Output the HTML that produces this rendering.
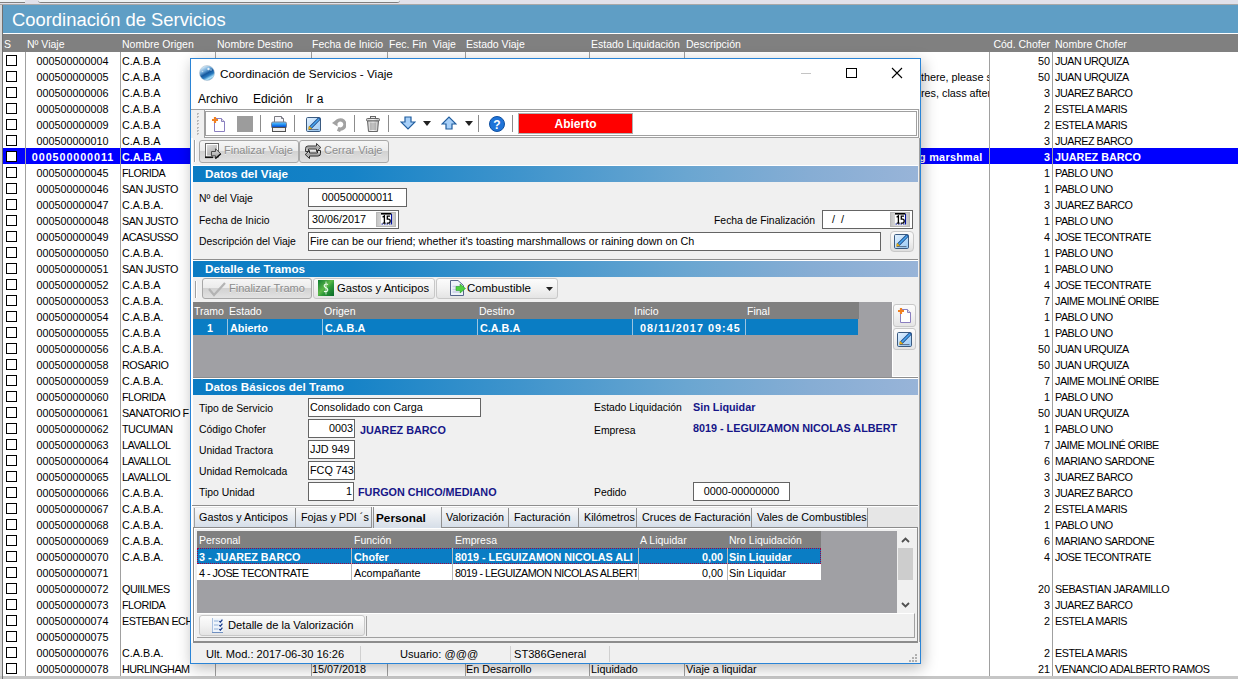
<!DOCTYPE html>
<html><head><meta charset="utf-8"><style>
html,body{margin:0;padding:0;width:1238px;height:679px;overflow:hidden;background:#f0f0f0}
body>div,body>svg{position:absolute}
.t{white-space:nowrap;font-family:"Liberation Sans",sans-serif}
</style></head><body>
<div style="left:0px;top:0px;width:1238px;height:679px;background:#f0f0f0"></div>
<div style="left:0px;top:0px;width:1238px;height:5px;background:#e1e1ea"></div>
<div style="left:0px;top:0px;width:25px;height:3px;background:#eef2f4;border-bottom:1px solid #808080;box-sizing:border-box"></div>
<div style="left:38px;top:0px;width:362px;height:3px;background:#eef2f4;border-bottom:1px solid #808080;box-sizing:border-box;border-radius:0 0 3px 3px"></div>
<div style="left:0px;top:4px;width:1238px;height:1px;background:#a8a8a8"></div>
<div style="left:0px;top:5px;width:2px;height:674px;background:#d8d8d8"></div>
<div style="left:2px;top:5px;width:1px;height:671px;background:#707070"></div>
<div style="left:3px;top:5px;width:1235px;height:28px;background:#5f9ec5"></div>
<div class="t" style="left:12px;top:5.5px;height:28px;line-height:28px;font-size:18.4px;font-weight:normal;color:#fff;">Coordinación de Servicios</div>
<div style="left:3px;top:33px;width:1235px;height:1px;background:#ffffff"></div>
<div style="left:3px;top:34px;width:1235px;height:18px;background:#808080"></div>
<div class="t" style="left:4px;top:35.5px;height:17px;line-height:17px;font-size:10.5px;font-weight:normal;color:#fff;">S</div>
<div class="t" style="left:27px;top:35.5px;height:17px;line-height:17px;font-size:10.5px;font-weight:normal;color:#fff;">Nº Viaje</div>
<div class="t" style="left:122px;top:35.5px;height:17px;line-height:17px;font-size:10.5px;font-weight:normal;color:#fff;">Nombre Origen</div>
<div class="t" style="left:217px;top:35.5px;height:17px;line-height:17px;font-size:10.5px;font-weight:normal;color:#fff;">Nombre Destino</div>
<div class="t" style="left:312px;top:35.5px;height:17px;line-height:17px;font-size:10.5px;font-weight:normal;color:#fff;">Fecha de Inicio</div>
<div class="t" style="left:389px;top:35.5px;height:17px;line-height:17px;font-size:10.5px;font-weight:normal;color:#fff;">Fec. Fin&nbsp; Viaje</div>
<div class="t" style="left:466px;top:35.5px;height:17px;line-height:17px;font-size:10.5px;font-weight:normal;color:#fff;">Estado Viaje</div>
<div class="t" style="left:591px;top:35.5px;height:17px;line-height:17px;font-size:10.5px;font-weight:normal;color:#fff;">Estado Liquidación</div>
<div class="t" style="left:686px;top:35.5px;height:17px;line-height:17px;font-size:10.5px;font-weight:normal;color:#fff;">Descripción</div>
<div class="t" style="left:1055px;top:35.5px;height:17px;line-height:17px;font-size:10.5px;font-weight:normal;color:#fff;">Nombre Chofer</div>
<div class="t" style="right:188px;top:35.5px;height:17px;line-height:17px;font-size:10.5px;font-weight:normal;color:#fff;text-align:right;">Cód. Chofer</div>
<div style="left:3px;top:52px;width:1235px;height:624px;background:#fff"></div>
<div style="left:6px;top:55px;width:11px;height:11px;background:#fff;border:1px solid #000;box-sizing:border-box"></div>
<div class="t" style="left:25px;top:53px;height:16px;line-height:16px;font-size:10.8px;font-weight:normal;color:#000;width:95px;text-align:center;">000500000004</div>
<div class="t" style="left:122px;top:53px;height:16px;line-height:16px;font-size:10.8px;font-weight:normal;color:#000;">C.A.B.A</div>
<div class="t" style="right:188px;top:53px;height:16px;line-height:16px;font-size:10.8px;font-weight:normal;color:#000;text-align:right;">50</div>
<div class="t" style="left:1055px;top:53px;height:16px;line-height:16px;font-size:10.8px;font-weight:normal;color:#000;letter-spacing:-0.5px;">JUAN URQUIZA</div>
<div style="left:6px;top:71px;width:11px;height:11px;background:#fff;border:1px solid #000;box-sizing:border-box"></div>
<div class="t" style="left:25px;top:69px;height:16px;line-height:16px;font-size:10.8px;font-weight:normal;color:#000;width:95px;text-align:center;">000500000005</div>
<div class="t" style="left:122px;top:69px;height:16px;line-height:16px;font-size:10.8px;font-weight:normal;color:#000;">C.A.B.A</div>
<div class="t" style="right:188px;top:69px;height:16px;line-height:16px;font-size:10.8px;font-weight:normal;color:#000;text-align:right;">50</div>
<div class="t" style="left:1055px;top:69px;height:16px;line-height:16px;font-size:10.8px;font-weight:normal;color:#000;letter-spacing:-0.5px;">JUAN URQUIZA</div>
<div style="left:6px;top:87px;width:11px;height:11px;background:#fff;border:1px solid #000;box-sizing:border-box"></div>
<div class="t" style="left:25px;top:85px;height:16px;line-height:16px;font-size:10.8px;font-weight:normal;color:#000;width:95px;text-align:center;">000500000006</div>
<div class="t" style="left:122px;top:85px;height:16px;line-height:16px;font-size:10.8px;font-weight:normal;color:#000;">C.A.B.A</div>
<div class="t" style="right:188px;top:85px;height:16px;line-height:16px;font-size:10.8px;font-weight:normal;color:#000;text-align:right;">3</div>
<div class="t" style="left:1055px;top:85px;height:16px;line-height:16px;font-size:10.8px;font-weight:normal;color:#000;letter-spacing:-0.5px;">JUAREZ BARCO</div>
<div style="left:6px;top:103px;width:11px;height:11px;background:#fff;border:1px solid #000;box-sizing:border-box"></div>
<div class="t" style="left:25px;top:101px;height:16px;line-height:16px;font-size:10.8px;font-weight:normal;color:#000;width:95px;text-align:center;">000500000008</div>
<div class="t" style="left:122px;top:101px;height:16px;line-height:16px;font-size:10.8px;font-weight:normal;color:#000;">C.A.B.A</div>
<div class="t" style="right:188px;top:101px;height:16px;line-height:16px;font-size:10.8px;font-weight:normal;color:#000;text-align:right;">2</div>
<div class="t" style="left:1055px;top:101px;height:16px;line-height:16px;font-size:10.8px;font-weight:normal;color:#000;letter-spacing:-0.5px;">ESTELA MARIS</div>
<div style="left:6px;top:119px;width:11px;height:11px;background:#fff;border:1px solid #000;box-sizing:border-box"></div>
<div class="t" style="left:25px;top:117px;height:16px;line-height:16px;font-size:10.8px;font-weight:normal;color:#000;width:95px;text-align:center;">000500000009</div>
<div class="t" style="left:122px;top:117px;height:16px;line-height:16px;font-size:10.8px;font-weight:normal;color:#000;">C.A.B.A</div>
<div class="t" style="right:188px;top:117px;height:16px;line-height:16px;font-size:10.8px;font-weight:normal;color:#000;text-align:right;">2</div>
<div class="t" style="left:1055px;top:117px;height:16px;line-height:16px;font-size:10.8px;font-weight:normal;color:#000;letter-spacing:-0.5px;">ESTELA MARIS</div>
<div style="left:6px;top:135px;width:11px;height:11px;background:#fff;border:1px solid #000;box-sizing:border-box"></div>
<div class="t" style="left:25px;top:133px;height:16px;line-height:16px;font-size:10.8px;font-weight:normal;color:#000;width:95px;text-align:center;">000500000010</div>
<div class="t" style="left:122px;top:133px;height:16px;line-height:16px;font-size:10.8px;font-weight:normal;color:#000;">C.A.B.A</div>
<div class="t" style="right:188px;top:133px;height:16px;line-height:16px;font-size:10.8px;font-weight:normal;color:#000;text-align:right;">3</div>
<div class="t" style="left:1055px;top:133px;height:16px;line-height:16px;font-size:10.8px;font-weight:normal;color:#000;letter-spacing:-0.5px;">JUAREZ BARCO</div>
<div style="left:3px;top:148px;width:1235px;height:16px;background:#0000ff"></div>
<div style="left:6px;top:151px;width:11px;height:11px;background:#fff;border:1px solid #000;box-sizing:border-box"></div>
<div class="t" style="left:25px;top:149px;height:16px;line-height:16px;font-size:10.8px;font-weight:bold;color:#fff;width:95px;text-align:center;letter-spacing:0.9px;text-indent:1px">000500000011</div>
<div class="t" style="left:122px;top:149px;height:16px;line-height:16px;font-size:10.8px;font-weight:bold;color:#fff;">C.A.B.A</div>
<div class="t" style="right:188px;top:149px;height:16px;line-height:16px;font-size:10.8px;font-weight:bold;color:#fff;text-align:right;">3</div>
<div class="t" style="left:1055px;top:149px;height:16px;line-height:16px;font-size:10.8px;font-weight:bold;color:#fff;">JUAREZ BARCO</div>
<div style="left:6px;top:167px;width:11px;height:11px;background:#fff;border:1px solid #000;box-sizing:border-box"></div>
<div class="t" style="left:25px;top:165px;height:16px;line-height:16px;font-size:10.8px;font-weight:normal;color:#000;width:95px;text-align:center;">000500000045</div>
<div class="t" style="left:122px;top:165px;height:16px;line-height:16px;font-size:10.8px;font-weight:normal;color:#000;letter-spacing:-0.5px;">FLORIDA</div>
<div class="t" style="right:188px;top:165px;height:16px;line-height:16px;font-size:10.8px;font-weight:normal;color:#000;text-align:right;">1</div>
<div class="t" style="left:1055px;top:165px;height:16px;line-height:16px;font-size:10.8px;font-weight:normal;color:#000;letter-spacing:-0.5px;">PABLO UNO</div>
<div style="left:6px;top:183px;width:11px;height:11px;background:#fff;border:1px solid #000;box-sizing:border-box"></div>
<div class="t" style="left:25px;top:181px;height:16px;line-height:16px;font-size:10.8px;font-weight:normal;color:#000;width:95px;text-align:center;">000500000046</div>
<div class="t" style="left:122px;top:181px;height:16px;line-height:16px;font-size:10.8px;font-weight:normal;color:#000;letter-spacing:-0.5px;">SAN JUSTO</div>
<div class="t" style="right:188px;top:181px;height:16px;line-height:16px;font-size:10.8px;font-weight:normal;color:#000;text-align:right;">1</div>
<div class="t" style="left:1055px;top:181px;height:16px;line-height:16px;font-size:10.8px;font-weight:normal;color:#000;letter-spacing:-0.5px;">PABLO UNO</div>
<div style="left:6px;top:199px;width:11px;height:11px;background:#fff;border:1px solid #000;box-sizing:border-box"></div>
<div class="t" style="left:25px;top:197px;height:16px;line-height:16px;font-size:10.8px;font-weight:normal;color:#000;width:95px;text-align:center;">000500000047</div>
<div class="t" style="left:122px;top:197px;height:16px;line-height:16px;font-size:10.8px;font-weight:normal;color:#000;">C.A.B.A.</div>
<div class="t" style="right:188px;top:197px;height:16px;line-height:16px;font-size:10.8px;font-weight:normal;color:#000;text-align:right;">3</div>
<div class="t" style="left:1055px;top:197px;height:16px;line-height:16px;font-size:10.8px;font-weight:normal;color:#000;letter-spacing:-0.5px;">JUAREZ BARCO</div>
<div style="left:6px;top:215px;width:11px;height:11px;background:#fff;border:1px solid #000;box-sizing:border-box"></div>
<div class="t" style="left:25px;top:213px;height:16px;line-height:16px;font-size:10.8px;font-weight:normal;color:#000;width:95px;text-align:center;">000500000048</div>
<div class="t" style="left:122px;top:213px;height:16px;line-height:16px;font-size:10.8px;font-weight:normal;color:#000;letter-spacing:-0.5px;">SAN JUSTO</div>
<div class="t" style="right:188px;top:213px;height:16px;line-height:16px;font-size:10.8px;font-weight:normal;color:#000;text-align:right;">1</div>
<div class="t" style="left:1055px;top:213px;height:16px;line-height:16px;font-size:10.8px;font-weight:normal;color:#000;letter-spacing:-0.5px;">PABLO UNO</div>
<div style="left:6px;top:231px;width:11px;height:11px;background:#fff;border:1px solid #000;box-sizing:border-box"></div>
<div class="t" style="left:25px;top:229px;height:16px;line-height:16px;font-size:10.8px;font-weight:normal;color:#000;width:95px;text-align:center;">000500000049</div>
<div class="t" style="left:122px;top:229px;height:16px;line-height:16px;font-size:10.8px;font-weight:normal;color:#000;letter-spacing:-0.5px;">ACASUSSO</div>
<div class="t" style="right:188px;top:229px;height:16px;line-height:16px;font-size:10.8px;font-weight:normal;color:#000;text-align:right;">4</div>
<div class="t" style="left:1055px;top:229px;height:16px;line-height:16px;font-size:10.8px;font-weight:normal;color:#000;letter-spacing:-0.5px;">JOSE TECONTRATE</div>
<div style="left:6px;top:247px;width:11px;height:11px;background:#fff;border:1px solid #000;box-sizing:border-box"></div>
<div class="t" style="left:25px;top:245px;height:16px;line-height:16px;font-size:10.8px;font-weight:normal;color:#000;width:95px;text-align:center;">000500000050</div>
<div class="t" style="left:122px;top:245px;height:16px;line-height:16px;font-size:10.8px;font-weight:normal;color:#000;">C.A.B.A.</div>
<div class="t" style="right:188px;top:245px;height:16px;line-height:16px;font-size:10.8px;font-weight:normal;color:#000;text-align:right;">1</div>
<div class="t" style="left:1055px;top:245px;height:16px;line-height:16px;font-size:10.8px;font-weight:normal;color:#000;letter-spacing:-0.5px;">PABLO UNO</div>
<div style="left:6px;top:263px;width:11px;height:11px;background:#fff;border:1px solid #000;box-sizing:border-box"></div>
<div class="t" style="left:25px;top:261px;height:16px;line-height:16px;font-size:10.8px;font-weight:normal;color:#000;width:95px;text-align:center;">000500000051</div>
<div class="t" style="left:122px;top:261px;height:16px;line-height:16px;font-size:10.8px;font-weight:normal;color:#000;letter-spacing:-0.5px;">SAN JUSTO</div>
<div class="t" style="right:188px;top:261px;height:16px;line-height:16px;font-size:10.8px;font-weight:normal;color:#000;text-align:right;">1</div>
<div class="t" style="left:1055px;top:261px;height:16px;line-height:16px;font-size:10.8px;font-weight:normal;color:#000;letter-spacing:-0.5px;">PABLO UNO</div>
<div style="left:6px;top:279px;width:11px;height:11px;background:#fff;border:1px solid #000;box-sizing:border-box"></div>
<div class="t" style="left:25px;top:277px;height:16px;line-height:16px;font-size:10.8px;font-weight:normal;color:#000;width:95px;text-align:center;">000500000052</div>
<div class="t" style="left:122px;top:277px;height:16px;line-height:16px;font-size:10.8px;font-weight:normal;color:#000;">C.A.B.A</div>
<div class="t" style="right:188px;top:277px;height:16px;line-height:16px;font-size:10.8px;font-weight:normal;color:#000;text-align:right;">4</div>
<div class="t" style="left:1055px;top:277px;height:16px;line-height:16px;font-size:10.8px;font-weight:normal;color:#000;letter-spacing:-0.5px;">JOSE TECONTRATE</div>
<div style="left:6px;top:295px;width:11px;height:11px;background:#fff;border:1px solid #000;box-sizing:border-box"></div>
<div class="t" style="left:25px;top:293px;height:16px;line-height:16px;font-size:10.8px;font-weight:normal;color:#000;width:95px;text-align:center;">000500000053</div>
<div class="t" style="left:122px;top:293px;height:16px;line-height:16px;font-size:10.8px;font-weight:normal;color:#000;">C.A.B.A.</div>
<div class="t" style="right:188px;top:293px;height:16px;line-height:16px;font-size:10.8px;font-weight:normal;color:#000;text-align:right;">7</div>
<div class="t" style="left:1055px;top:293px;height:16px;line-height:16px;font-size:10.8px;font-weight:normal;color:#000;letter-spacing:-0.5px;">JAIME MOLINÉ ORIBE</div>
<div style="left:6px;top:311px;width:11px;height:11px;background:#fff;border:1px solid #000;box-sizing:border-box"></div>
<div class="t" style="left:25px;top:309px;height:16px;line-height:16px;font-size:10.8px;font-weight:normal;color:#000;width:95px;text-align:center;">000500000054</div>
<div class="t" style="left:122px;top:309px;height:16px;line-height:16px;font-size:10.8px;font-weight:normal;color:#000;">C.A.B.A.</div>
<div class="t" style="right:188px;top:309px;height:16px;line-height:16px;font-size:10.8px;font-weight:normal;color:#000;text-align:right;">1</div>
<div class="t" style="left:1055px;top:309px;height:16px;line-height:16px;font-size:10.8px;font-weight:normal;color:#000;letter-spacing:-0.5px;">PABLO UNO</div>
<div style="left:6px;top:327px;width:11px;height:11px;background:#fff;border:1px solid #000;box-sizing:border-box"></div>
<div class="t" style="left:25px;top:325px;height:16px;line-height:16px;font-size:10.8px;font-weight:normal;color:#000;width:95px;text-align:center;">000500000055</div>
<div class="t" style="left:122px;top:325px;height:16px;line-height:16px;font-size:10.8px;font-weight:normal;color:#000;">C.A.B.A</div>
<div class="t" style="right:188px;top:325px;height:16px;line-height:16px;font-size:10.8px;font-weight:normal;color:#000;text-align:right;">1</div>
<div class="t" style="left:1055px;top:325px;height:16px;line-height:16px;font-size:10.8px;font-weight:normal;color:#000;letter-spacing:-0.5px;">PABLO UNO</div>
<div style="left:6px;top:343px;width:11px;height:11px;background:#fff;border:1px solid #000;box-sizing:border-box"></div>
<div class="t" style="left:25px;top:341px;height:16px;line-height:16px;font-size:10.8px;font-weight:normal;color:#000;width:95px;text-align:center;">000500000056</div>
<div class="t" style="left:122px;top:341px;height:16px;line-height:16px;font-size:10.8px;font-weight:normal;color:#000;">C.A.B.A.</div>
<div class="t" style="right:188px;top:341px;height:16px;line-height:16px;font-size:10.8px;font-weight:normal;color:#000;text-align:right;">50</div>
<div class="t" style="left:1055px;top:341px;height:16px;line-height:16px;font-size:10.8px;font-weight:normal;color:#000;letter-spacing:-0.5px;">JUAN URQUIZA</div>
<div style="left:6px;top:359px;width:11px;height:11px;background:#fff;border:1px solid #000;box-sizing:border-box"></div>
<div class="t" style="left:25px;top:357px;height:16px;line-height:16px;font-size:10.8px;font-weight:normal;color:#000;width:95px;text-align:center;">000500000058</div>
<div class="t" style="left:122px;top:357px;height:16px;line-height:16px;font-size:10.8px;font-weight:normal;color:#000;letter-spacing:-0.5px;">ROSARIO</div>
<div class="t" style="right:188px;top:357px;height:16px;line-height:16px;font-size:10.8px;font-weight:normal;color:#000;text-align:right;">50</div>
<div class="t" style="left:1055px;top:357px;height:16px;line-height:16px;font-size:10.8px;font-weight:normal;color:#000;letter-spacing:-0.5px;">JUAN URQUIZA</div>
<div style="left:6px;top:375px;width:11px;height:11px;background:#fff;border:1px solid #000;box-sizing:border-box"></div>
<div class="t" style="left:25px;top:373px;height:16px;line-height:16px;font-size:10.8px;font-weight:normal;color:#000;width:95px;text-align:center;">000500000059</div>
<div class="t" style="left:122px;top:373px;height:16px;line-height:16px;font-size:10.8px;font-weight:normal;color:#000;">C.A.B.A.</div>
<div class="t" style="right:188px;top:373px;height:16px;line-height:16px;font-size:10.8px;font-weight:normal;color:#000;text-align:right;">7</div>
<div class="t" style="left:1055px;top:373px;height:16px;line-height:16px;font-size:10.8px;font-weight:normal;color:#000;letter-spacing:-0.5px;">JAIME MOLINÉ ORIBE</div>
<div style="left:6px;top:391px;width:11px;height:11px;background:#fff;border:1px solid #000;box-sizing:border-box"></div>
<div class="t" style="left:25px;top:389px;height:16px;line-height:16px;font-size:10.8px;font-weight:normal;color:#000;width:95px;text-align:center;">000500000060</div>
<div class="t" style="left:122px;top:389px;height:16px;line-height:16px;font-size:10.8px;font-weight:normal;color:#000;letter-spacing:-0.5px;">FLORIDA</div>
<div class="t" style="right:188px;top:389px;height:16px;line-height:16px;font-size:10.8px;font-weight:normal;color:#000;text-align:right;">1</div>
<div class="t" style="left:1055px;top:389px;height:16px;line-height:16px;font-size:10.8px;font-weight:normal;color:#000;letter-spacing:-0.5px;">PABLO UNO</div>
<div style="left:6px;top:407px;width:11px;height:11px;background:#fff;border:1px solid #000;box-sizing:border-box"></div>
<div class="t" style="left:25px;top:405px;height:16px;line-height:16px;font-size:10.8px;font-weight:normal;color:#000;width:95px;text-align:center;">000500000061</div>
<div class="t" style="left:122px;top:405px;height:16px;line-height:16px;font-size:10.8px;font-weight:normal;color:#000;letter-spacing:-0.5px;">SANATORIO F</div>
<div class="t" style="right:188px;top:405px;height:16px;line-height:16px;font-size:10.8px;font-weight:normal;color:#000;text-align:right;">50</div>
<div class="t" style="left:1055px;top:405px;height:16px;line-height:16px;font-size:10.8px;font-weight:normal;color:#000;letter-spacing:-0.5px;">JUAN URQUIZA</div>
<div style="left:6px;top:423px;width:11px;height:11px;background:#fff;border:1px solid #000;box-sizing:border-box"></div>
<div class="t" style="left:25px;top:421px;height:16px;line-height:16px;font-size:10.8px;font-weight:normal;color:#000;width:95px;text-align:center;">000500000062</div>
<div class="t" style="left:122px;top:421px;height:16px;line-height:16px;font-size:10.8px;font-weight:normal;color:#000;letter-spacing:-0.5px;">TUCUMAN</div>
<div class="t" style="right:188px;top:421px;height:16px;line-height:16px;font-size:10.8px;font-weight:normal;color:#000;text-align:right;">1</div>
<div class="t" style="left:1055px;top:421px;height:16px;line-height:16px;font-size:10.8px;font-weight:normal;color:#000;letter-spacing:-0.5px;">PABLO UNO</div>
<div style="left:6px;top:439px;width:11px;height:11px;background:#fff;border:1px solid #000;box-sizing:border-box"></div>
<div class="t" style="left:25px;top:437px;height:16px;line-height:16px;font-size:10.8px;font-weight:normal;color:#000;width:95px;text-align:center;">000500000063</div>
<div class="t" style="left:122px;top:437px;height:16px;line-height:16px;font-size:10.8px;font-weight:normal;color:#000;letter-spacing:-0.5px;">LAVALLOL</div>
<div class="t" style="right:188px;top:437px;height:16px;line-height:16px;font-size:10.8px;font-weight:normal;color:#000;text-align:right;">7</div>
<div class="t" style="left:1055px;top:437px;height:16px;line-height:16px;font-size:10.8px;font-weight:normal;color:#000;letter-spacing:-0.5px;">JAIME MOLINÉ ORIBE</div>
<div style="left:6px;top:455px;width:11px;height:11px;background:#fff;border:1px solid #000;box-sizing:border-box"></div>
<div class="t" style="left:25px;top:453px;height:16px;line-height:16px;font-size:10.8px;font-weight:normal;color:#000;width:95px;text-align:center;">000500000064</div>
<div class="t" style="left:122px;top:453px;height:16px;line-height:16px;font-size:10.8px;font-weight:normal;color:#000;letter-spacing:-0.5px;">LAVALLOL</div>
<div class="t" style="right:188px;top:453px;height:16px;line-height:16px;font-size:10.8px;font-weight:normal;color:#000;text-align:right;">6</div>
<div class="t" style="left:1055px;top:453px;height:16px;line-height:16px;font-size:10.8px;font-weight:normal;color:#000;letter-spacing:-0.5px;">MARIANO SARDONE</div>
<div style="left:6px;top:471px;width:11px;height:11px;background:#fff;border:1px solid #000;box-sizing:border-box"></div>
<div class="t" style="left:25px;top:469px;height:16px;line-height:16px;font-size:10.8px;font-weight:normal;color:#000;width:95px;text-align:center;">000500000065</div>
<div class="t" style="left:122px;top:469px;height:16px;line-height:16px;font-size:10.8px;font-weight:normal;color:#000;letter-spacing:-0.5px;">LAVALLOL</div>
<div class="t" style="right:188px;top:469px;height:16px;line-height:16px;font-size:10.8px;font-weight:normal;color:#000;text-align:right;">3</div>
<div class="t" style="left:1055px;top:469px;height:16px;line-height:16px;font-size:10.8px;font-weight:normal;color:#000;letter-spacing:-0.5px;">JUAREZ BARCO</div>
<div style="left:6px;top:487px;width:11px;height:11px;background:#fff;border:1px solid #000;box-sizing:border-box"></div>
<div class="t" style="left:25px;top:485px;height:16px;line-height:16px;font-size:10.8px;font-weight:normal;color:#000;width:95px;text-align:center;">000500000066</div>
<div class="t" style="left:122px;top:485px;height:16px;line-height:16px;font-size:10.8px;font-weight:normal;color:#000;">C.A.B.A.</div>
<div class="t" style="right:188px;top:485px;height:16px;line-height:16px;font-size:10.8px;font-weight:normal;color:#000;text-align:right;">3</div>
<div class="t" style="left:1055px;top:485px;height:16px;line-height:16px;font-size:10.8px;font-weight:normal;color:#000;letter-spacing:-0.5px;">JUAREZ BARCO</div>
<div style="left:6px;top:503px;width:11px;height:11px;background:#fff;border:1px solid #000;box-sizing:border-box"></div>
<div class="t" style="left:25px;top:501px;height:16px;line-height:16px;font-size:10.8px;font-weight:normal;color:#000;width:95px;text-align:center;">000500000067</div>
<div class="t" style="left:122px;top:501px;height:16px;line-height:16px;font-size:10.8px;font-weight:normal;color:#000;">C.A.B.A.</div>
<div class="t" style="right:188px;top:501px;height:16px;line-height:16px;font-size:10.8px;font-weight:normal;color:#000;text-align:right;">2</div>
<div class="t" style="left:1055px;top:501px;height:16px;line-height:16px;font-size:10.8px;font-weight:normal;color:#000;letter-spacing:-0.5px;">ESTELA MARIS</div>
<div style="left:6px;top:519px;width:11px;height:11px;background:#fff;border:1px solid #000;box-sizing:border-box"></div>
<div class="t" style="left:25px;top:517px;height:16px;line-height:16px;font-size:10.8px;font-weight:normal;color:#000;width:95px;text-align:center;">000500000068</div>
<div class="t" style="left:122px;top:517px;height:16px;line-height:16px;font-size:10.8px;font-weight:normal;color:#000;">C.A.B.A.</div>
<div class="t" style="right:188px;top:517px;height:16px;line-height:16px;font-size:10.8px;font-weight:normal;color:#000;text-align:right;">1</div>
<div class="t" style="left:1055px;top:517px;height:16px;line-height:16px;font-size:10.8px;font-weight:normal;color:#000;letter-spacing:-0.5px;">PABLO UNO</div>
<div style="left:6px;top:535px;width:11px;height:11px;background:#fff;border:1px solid #000;box-sizing:border-box"></div>
<div class="t" style="left:25px;top:533px;height:16px;line-height:16px;font-size:10.8px;font-weight:normal;color:#000;width:95px;text-align:center;">000500000069</div>
<div class="t" style="left:122px;top:533px;height:16px;line-height:16px;font-size:10.8px;font-weight:normal;color:#000;">C.A.B.A.</div>
<div class="t" style="right:188px;top:533px;height:16px;line-height:16px;font-size:10.8px;font-weight:normal;color:#000;text-align:right;">6</div>
<div class="t" style="left:1055px;top:533px;height:16px;line-height:16px;font-size:10.8px;font-weight:normal;color:#000;letter-spacing:-0.5px;">MARIANO SARDONE</div>
<div style="left:6px;top:551px;width:11px;height:11px;background:#fff;border:1px solid #000;box-sizing:border-box"></div>
<div class="t" style="left:25px;top:549px;height:16px;line-height:16px;font-size:10.8px;font-weight:normal;color:#000;width:95px;text-align:center;">000500000070</div>
<div class="t" style="left:122px;top:549px;height:16px;line-height:16px;font-size:10.8px;font-weight:normal;color:#000;">C.A.B.A.</div>
<div class="t" style="right:188px;top:549px;height:16px;line-height:16px;font-size:10.8px;font-weight:normal;color:#000;text-align:right;">4</div>
<div class="t" style="left:1055px;top:549px;height:16px;line-height:16px;font-size:10.8px;font-weight:normal;color:#000;letter-spacing:-0.5px;">JOSE TECONTRATE</div>
<div style="left:6px;top:567px;width:11px;height:11px;background:#fff;border:1px solid #000;box-sizing:border-box"></div>
<div class="t" style="left:25px;top:565px;height:16px;line-height:16px;font-size:10.8px;font-weight:normal;color:#000;width:95px;text-align:center;">000500000071</div>
<div class="t" style="left:122px;top:565px;height:16px;line-height:16px;font-size:10.8px;font-weight:normal;color:#000;"></div>
<div class="t" style="left:1055px;top:565px;height:16px;line-height:16px;font-size:10.8px;font-weight:normal;color:#000;"></div>
<div style="left:6px;top:583px;width:11px;height:11px;background:#fff;border:1px solid #000;box-sizing:border-box"></div>
<div class="t" style="left:25px;top:581px;height:16px;line-height:16px;font-size:10.8px;font-weight:normal;color:#000;width:95px;text-align:center;">000500000072</div>
<div class="t" style="left:122px;top:581px;height:16px;line-height:16px;font-size:10.8px;font-weight:normal;color:#000;letter-spacing:-0.5px;">QUIILMES</div>
<div class="t" style="right:188px;top:581px;height:16px;line-height:16px;font-size:10.8px;font-weight:normal;color:#000;text-align:right;">20</div>
<div class="t" style="left:1055px;top:581px;height:16px;line-height:16px;font-size:10.8px;font-weight:normal;color:#000;letter-spacing:-0.5px;">SEBASTIAN JARAMILLO</div>
<div style="left:6px;top:599px;width:11px;height:11px;background:#fff;border:1px solid #000;box-sizing:border-box"></div>
<div class="t" style="left:25px;top:597px;height:16px;line-height:16px;font-size:10.8px;font-weight:normal;color:#000;width:95px;text-align:center;">000500000073</div>
<div class="t" style="left:122px;top:597px;height:16px;line-height:16px;font-size:10.8px;font-weight:normal;color:#000;letter-spacing:-0.5px;">FLORIDA</div>
<div class="t" style="right:188px;top:597px;height:16px;line-height:16px;font-size:10.8px;font-weight:normal;color:#000;text-align:right;">3</div>
<div class="t" style="left:1055px;top:597px;height:16px;line-height:16px;font-size:10.8px;font-weight:normal;color:#000;letter-spacing:-0.5px;">JUAREZ BARCO</div>
<div style="left:6px;top:615px;width:11px;height:11px;background:#fff;border:1px solid #000;box-sizing:border-box"></div>
<div class="t" style="left:25px;top:613px;height:16px;line-height:16px;font-size:10.8px;font-weight:normal;color:#000;width:95px;text-align:center;">000500000074</div>
<div class="t" style="left:122px;top:613px;height:16px;line-height:16px;font-size:10.8px;font-weight:normal;color:#000;letter-spacing:-0.5px;">ESTEBAN ECH</div>
<div class="t" style="right:188px;top:613px;height:16px;line-height:16px;font-size:10.8px;font-weight:normal;color:#000;text-align:right;">2</div>
<div class="t" style="left:1055px;top:613px;height:16px;line-height:16px;font-size:10.8px;font-weight:normal;color:#000;letter-spacing:-0.5px;">ESTELA MARIS</div>
<div style="left:6px;top:631px;width:11px;height:11px;background:#fff;border:1px solid #000;box-sizing:border-box"></div>
<div class="t" style="left:25px;top:629px;height:16px;line-height:16px;font-size:10.8px;font-weight:normal;color:#000;width:95px;text-align:center;">000500000075</div>
<div class="t" style="left:122px;top:629px;height:16px;line-height:16px;font-size:10.8px;font-weight:normal;color:#000;"></div>
<div class="t" style="left:1055px;top:629px;height:16px;line-height:16px;font-size:10.8px;font-weight:normal;color:#000;"></div>
<div style="left:6px;top:647px;width:11px;height:11px;background:#fff;border:1px solid #000;box-sizing:border-box"></div>
<div class="t" style="left:25px;top:645px;height:16px;line-height:16px;font-size:10.8px;font-weight:normal;color:#000;width:95px;text-align:center;">000500000076</div>
<div class="t" style="left:122px;top:645px;height:16px;line-height:16px;font-size:10.8px;font-weight:normal;color:#000;">C.A.B.A.</div>
<div class="t" style="right:188px;top:645px;height:16px;line-height:16px;font-size:10.8px;font-weight:normal;color:#000;text-align:right;">2</div>
<div class="t" style="left:1055px;top:645px;height:16px;line-height:16px;font-size:10.8px;font-weight:normal;color:#000;letter-spacing:-0.5px;">ESTELA MARIS</div>
<div style="left:6px;top:663px;width:11px;height:11px;background:#fff;border:1px solid #000;box-sizing:border-box"></div>
<div class="t" style="left:25px;top:661px;height:16px;line-height:16px;font-size:10.8px;font-weight:normal;color:#000;width:95px;text-align:center;">000500000078</div>
<div class="t" style="left:122px;top:661px;height:16px;line-height:16px;font-size:10.8px;font-weight:normal;color:#000;letter-spacing:-0.5px;">HURLINGHAM</div>
<div class="t" style="right:188px;top:661px;height:16px;line-height:16px;font-size:10.8px;font-weight:normal;color:#000;text-align:right;">21</div>
<div class="t" style="left:1055px;top:661px;height:16px;line-height:16px;font-size:10.8px;font-weight:normal;color:#000;letter-spacing:-0.5px;">VENANCIO ADALBERTO RAMOS</div>
<div class="t" style="left:921px;top:69px;height:16px;line-height:16px;font-size:10.8px;font-weight:normal;color:#000;width:68px;overflow:hidden;white-space:nowrap">there, please s</div>
<div class="t" style="left:921px;top:85px;height:16px;line-height:16px;font-size:10.8px;font-weight:normal;color:#000;width:68px;overflow:hidden;white-space:nowrap">res, class after</div>
<div class="t" style="left:919px;top:149px;height:16px;line-height:16px;font-size:10.8px;font-weight:bold;color:#fff;width:70px;letter-spacing:0.3px;overflow:hidden;white-space:nowrap">g marshmal</div>
<div class="t" style="left:312px;top:661px;height:16px;line-height:16px;font-size:10.8px;font-weight:normal;color:#000;">15/07/2018</div>
<div class="t" style="left:466px;top:661px;height:16px;line-height:16px;font-size:10.8px;font-weight:normal;color:#000;">En Desarrollo</div>
<div class="t" style="left:591px;top:661px;height:16px;line-height:16px;font-size:10.8px;font-weight:normal;color:#000;">Liquidado</div>
<div class="t" style="left:686px;top:661px;height:16px;line-height:16px;font-size:10.8px;font-weight:normal;color:#000;">Viaje a liquidar</div>
<div style="left:25px;top:52px;width:1px;height:624px;background:#a0a0a0"></div>
<div style="left:120px;top:52px;width:1px;height:624px;background:#a0a0a0"></div>
<div style="left:215px;top:52px;width:1px;height:624px;background:#a0a0a0"></div>
<div style="left:311px;top:52px;width:1px;height:624px;background:#a0a0a0"></div>
<div style="left:387px;top:52px;width:1px;height:624px;background:#a0a0a0"></div>
<div style="left:465px;top:52px;width:1px;height:624px;background:#a0a0a0"></div>
<div style="left:589px;top:52px;width:1px;height:624px;background:#a0a0a0"></div>
<div style="left:684px;top:52px;width:1px;height:624px;background:#a0a0a0"></div>
<div style="left:989px;top:52px;width:1px;height:624px;background:#a0a0a0"></div>
<div style="left:1052px;top:52px;width:1px;height:624px;background:#a0a0a0"></div>
<div style="left:0px;top:676px;width:1238px;height:3px;background:#c6c6c6"></div>
<div style="left:2px;top:676px;width:1px;height:3px;background:#707070"></div>
<div style="left:190px;top:58px;width:731px;height:606px;box-shadow:2px 4px 14px rgba(0,0,0,0.28)"></div>
<div style="left:190px;top:58px;width:731px;height:606px;background:#f0f0f0;border:1px solid #2a84d6;box-sizing:border-box"></div>
<div style="left:191px;top:59px;width:729px;height:50px;background:#fff"></div>
<svg style="position:absolute;left:199px;top:65px;" width="16" height="16" viewBox="0 0 16 16"><defs><linearGradient id="gl" x1="0.2" y1="0.1" x2="0.7" y2="1"><stop offset="0" stop-color="#d8ecf8"/><stop offset="0.3" stop-color="#6aa6d8"/><stop offset="0.5" stop-color="#14589e"/><stop offset="0.68" stop-color="#2a7cc0"/><stop offset="0.85" stop-color="#a8e0fa"/><stop offset="1" stop-color="#5aa0d0"/></linearGradient></defs><circle cx="8" cy="8" r="7.5" fill="url(#gl)" stroke="#a8b8c8" stroke-width="0.5"/><circle cx="9.5" cy="4" r="1.2" fill="#fff" opacity="0.85"/><circle cx="12" cy="5" r="0.8" fill="#fff" opacity="0.6"/><circle cx="3.5" cy="6.5" r="0.8" fill="#fff" opacity="0.5"/></svg>
<div class="t" style="left:220px;top:64.5px;height:17px;line-height:17px;font-size:11.75px;font-weight:normal;color:#000;">Coordinación de Servicios - Viaje</div>
<div style="left:801px;top:73px;width:10px;height:1px;background:#c4c4c4"></div>
<div style="left:846px;top:68px;width:11px;height:10px;border:1px solid #000;box-sizing:border-box"></div>
<svg style="position:absolute;left:891px;top:67px;" width="12" height="12" viewBox="0 0 12 12"><path d="M1 1L11 11M11 1L1 11" stroke="#000" stroke-width="1.1"/></svg>
<div class="t" style="left:198px;top:91px;height:17px;line-height:17px;font-size:12px;font-weight:normal;color:#000;">Archivo</div>
<div class="t" style="left:253px;top:91px;height:17px;line-height:17px;font-size:12px;font-weight:normal;color:#000;">Edición</div>
<div class="t" style="left:306px;top:91px;height:17px;line-height:17px;font-size:12px;font-weight:normal;color:#000;">Ir a</div>
<div style="left:191px;top:109px;width:728px;height:1px;background:#a0a0a0"></div>
<div style="left:197px;top:113px;width:2px;height:2px;background:#b8b8b8"></div>
<div style="left:198px;top:114px;width:1px;height:1px;background:#e8e8e8"></div>
<div style="left:197px;top:116px;width:2px;height:2px;background:#b8b8b8"></div>
<div style="left:198px;top:117px;width:1px;height:1px;background:#e8e8e8"></div>
<div style="left:197px;top:120px;width:2px;height:2px;background:#b8b8b8"></div>
<div style="left:198px;top:121px;width:1px;height:1px;background:#e8e8e8"></div>
<div style="left:197px;top:123px;width:2px;height:2px;background:#b8b8b8"></div>
<div style="left:198px;top:124px;width:1px;height:1px;background:#e8e8e8"></div>
<div style="left:197px;top:127px;width:2px;height:2px;background:#b8b8b8"></div>
<div style="left:198px;top:128px;width:1px;height:1px;background:#e8e8e8"></div>
<div style="left:197px;top:130px;width:2px;height:2px;background:#b8b8b8"></div>
<div style="left:198px;top:131px;width:1px;height:1px;background:#e8e8e8"></div>
<div style="left:197px;top:133px;width:2px;height:2px;background:#b8b8b8"></div>
<div style="left:198px;top:134px;width:1px;height:1px;background:#e8e8e8"></div>
<div style="left:204px;top:109px;width:715px;height:29px;background:#fff;border:1px solid #a0a0a0;box-sizing:border-box"></div>
<div style="left:191px;top:109px;width:14px;height:1px;background:#a0a0a0"></div>
<div style="left:205px;top:111px;width:712px;height:25px;background:#fff;border:1px solid #a0a0a0;box-sizing:border-box"></div>
<svg style="position:absolute;left:210px;top:116px;" width="16" height="16" viewBox="0 0 16 16"><path d="M4.5 2.5H11.5L14.5 5.5V15.5H4.5Z" fill="#fff" stroke="#8a7fc0"/><path d="M11.5 2.5V5.5H14.5" fill="#ddd" stroke="#8a7fc0"/><path d="M2 4H8M5 1V7" stroke="#f08020" stroke-width="2.2"/></svg>
<div style="left:237px;top:116px;width:16px;height:16px;background:#9c9c9c"></div>
<div style="left:260px;top:115px;width:1px;height:17px;background:#8c8c8c"></div>
<svg style="position:absolute;left:271px;top:116px;" width="16" height="16" viewBox="0 0 16 16"><defs><linearGradient id="pb" x1="0" y1="0" x2="0" y2="1"><stop offset="0" stop-color="#6cc8ff"/><stop offset="0.5" stop-color="#1a8af0"/><stop offset="1" stop-color="#0628b8"/></linearGradient></defs><path d="M3.5 0.5H10.5L12.5 2.5V8H3.5Z" fill="#f6f6fa" stroke="#7a7a80"/><path d="M10.5 0.5V2.5H12.5" fill="#c8c0e8" stroke="#7a7a80"/><rect x="0.5" y="6" width="15" height="6" rx="1.5" fill="url(#pb)" stroke="#7a8090"/><rect x="1.5" y="11.5" width="13" height="4" fill="#eeeeee" stroke="#505050"/></svg>
<div style="left:294px;top:115px;width:1px;height:17px;background:#8c8c8c"></div>
<svg style="position:absolute;left:306px;top:117px;" width="15" height="15" viewBox="0 0 15 15"><defs><linearGradient id="eg1" x1="0" y1="0" x2="1" y2="1"><stop offset="0" stop-color="#e4f2ff"/><stop offset="1" stop-color="#98c8f4"/></linearGradient></defs><rect x="0.5" y="0.5" width="14" height="14" rx="1.2" fill="url(#eg1)" stroke="#3a5a80"/><path d="M4.5 10.5L12.8 2.2" stroke="#1e4a8a" stroke-width="3.2" stroke-linecap="round"/><path d="M4.5 10.5L12.8 2.2" stroke="#4aa8f0" stroke-width="1.6" stroke-linecap="round"/><path d="M2.5 12.5L3.2 9.2L5.8 11.8Z" fill="#f0b818" stroke="#c08a10" stroke-width="0.6"/><path d="M3 12.6H12.5" stroke="#40506a" stroke-width="0.8"/></svg>
<svg style="position:absolute;left:332px;top:117px;" width="14" height="15" viewBox="0 0 14 15"><path d="M4.2 5.5A4.6 4.6 0 1 1 7.5 12 L6.5 14.5" fill="none" stroke="#a2a2a2" stroke-width="3.4"/><path d="M0 6L5.5 2V9.5Z" fill="#a2a2a2"/></svg>
<div style="left:354px;top:115px;width:1px;height:17px;background:#8c8c8c"></div>
<svg style="position:absolute;left:365px;top:116px;" width="16" height="16" viewBox="0 0 16 16"><defs><linearGradient id="tg" x1="0" y1="0" x2="1" y2="0"><stop offset="0" stop-color="#c8c8c8"/><stop offset="0.5" stop-color="#f8f8f8"/><stop offset="1" stop-color="#b8b8b8"/></linearGradient></defs><rect x="5.5" y="0.5" width="5" height="2" fill="#e8e8e8" stroke="#666"/><rect x="1.5" y="2.5" width="13" height="2.5" rx="1" fill="url(#tg)" stroke="#666"/><path d="M2.5 5L3.5 15.5H12.5L13.5 5Z" fill="url(#tg)" stroke="#666"/><path d="M6 6.5V14M8 6.5V14M10 6.5V14" stroke="#8a8a8a"/></svg>
<div style="left:388px;top:115px;width:1px;height:17px;background:#8c8c8c"></div>
<svg style="position:absolute;left:400px;top:116px;" width="16" height="14" viewBox="0 0 16 14"><path d="M5 1H11V6H15L8 13L1 6H5Z" fill="#a8d0f8" stroke="#1f5c9e" stroke-width="1.2"/></svg>
<svg style="position:absolute;left:423px;top:121px;" width="8" height="5" viewBox="0 0 8 5"><path d="M0 0H8L4 5Z" fill="#222"/></svg>
<svg style="position:absolute;left:441px;top:116px;" width="16" height="14" viewBox="0 0 16 14"><path d="M5 13H11V8H15L8 1L1 8H5Z" fill="#a8d0f8" stroke="#1f5c9e" stroke-width="1.2"/></svg>
<svg style="position:absolute;left:465px;top:121px;" width="8" height="5" viewBox="0 0 8 5"><path d="M0 0H8L4 5Z" fill="#222"/></svg>
<div style="left:478px;top:115px;width:1px;height:17px;background:#8c8c8c"></div>
<svg style="position:absolute;left:489px;top:116px;" width="16" height="16" viewBox="0 0 16 16"><circle cx="8" cy="8" r="7.5" fill="#1f74d8" stroke="#0f4fa0"/><text x="8" y="12.5" font-family="Liberation Sans" font-weight="bold" font-size="12" fill="#fff" text-anchor="middle">?</text></svg>
<div style="left:512px;top:115px;width:1px;height:17px;background:#8c8c8c"></div>
<div style="left:518px;top:113px;width:115px;height:21px;background:#ff0000;border:1px solid #b0b0b0;box-sizing:border-box"></div>
<div class="t" style="left:518px;top:115px;height:19px;line-height:19px;font-size:12px;font-weight:bold;color:#fff;width:115px;text-align:center">Abierto</div>
<div style="left:194px;top:140px;width:1px;height:22px;background:#a0a0a0"></div>
<div style="left:195px;top:140px;width:1px;height:22px;background:#fff"></div>
<div style="left:199px;top:140px;width:100px;height:23px;border:1px solid #a8a8a8;border-radius:3px;box-sizing:border-box;background:linear-gradient(#f6f6f6 0%,#ececec 45%,#d2d2d2 50%,#e2e2e2 100%)"></div>
<div style="left:299px;top:140px;width:90px;height:23px;border:1px solid #a8a8a8;border-radius:3px;box-sizing:border-box;background:linear-gradient(#f6f6f6 0%,#ececec 45%,#d2d2d2 50%,#e2e2e2 100%)"></div>
<svg style="position:absolute;left:204px;top:142px;" width="19" height="18" viewBox="0 0 19 18"><defs><linearGradient id="fg" x1="0" y1="0" x2="0.6" y2="1"><stop offset="0" stop-color="#e6e6e6"/><stop offset="1" stop-color="#a8a8a8"/></linearGradient><linearGradient id="fa" x1="0" y1="0" x2="0" y2="1"><stop offset="0" stop-color="#e0e0e0"/><stop offset="1" stop-color="#9a9a9a"/></linearGradient></defs><rect x="1.5" y="1.5" width="13" height="13.5" fill="url(#fg)" stroke="#6a6a6a"/><rect x="2.5" y="2.5" width="11" height="11.5" fill="none" stroke="#fff"/><path d="M1 15.3H9" stroke="#111" stroke-width="1.6"/><path d="M7.5 9.5H11.5V6.8L16.8 11.8L11.5 16.6V13.8H7.5Z" fill="url(#fa)" stroke="#4a4a4a"/><path d="M11.5 16.6L16.8 11.8" stroke="#111" stroke-width="1.4"/></svg>
<div class="t" style="left:224px;top:141px;height:19px;line-height:19px;font-size:11px;font-weight:normal;color:#8c8c8c;text-shadow:0 1px 0 rgba(255,255,255,0.6)">Finalizar Viaje</div>
<svg style="position:absolute;left:304px;top:142px;" width="18" height="18" viewBox="0 0 18 18"><defs><linearGradient id="ca" x1="0" y1="0" x2="0" y2="1"><stop offset="0" stop-color="#f0f0f0"/><stop offset="0.5" stop-color="#a8a8a8"/><stop offset="1" stop-color="#d8d8d8"/></linearGradient></defs><path d="M1.5 9.5V6.5Q1.5 4 4 4H12.5V1.5L16.8 5.5L12.5 9.5V7H4.5V9.5Z" fill="url(#ca)" stroke="#3a3a3a"/><path d="M16.5 8.5V11.5Q16.5 14 14 14H5.5V16.5L1.2 12.5L5.5 8.5V11H13.5V8.5Z" fill="url(#ca)" stroke="#2a2a2a"/></svg>
<div class="t" style="left:324px;top:141px;height:19px;line-height:19px;font-size:11px;font-weight:normal;color:#8c8c8c;text-shadow:0 1px 0 rgba(255,255,255,0.6)">Cerrar Viaje</div>
<div style="left:191px;top:138px;width:2px;height:505px;background:#fff"></div>
<div style="left:193px;top:165px;width:725px;height:1px;background:#fff"></div>
<div style="left:193px;top:166px;width:725px;height:16px;background:linear-gradient(to right,#0a7bc3 0%,#1683c7 22%,#3f94cc 45%,#6aa6d1 68%,#86add4 85%,#98b4d8 100%)"></div>
<div class="t" style="left:205px;top:166px;height:16px;line-height:16px;font-size:11.7px;font-weight:bold;color:#fff;">Datos del Viaje</div>
<div class="t" style="left:199px;top:189px;height:17px;line-height:17px;font-size:10.4px;font-weight:normal;color:#000;margin-top:1px">Nº del Viaje</div>
<div style="left:308px;top:188px;width:99px;height:19px;background:#fff;border:1px solid #646464;box-sizing:border-box"></div>
<div class="t" style="left:308px;top:189px;height:17px;line-height:17px;font-size:10.8px;font-weight:normal;color:#000;width:99px;text-align:center">000500000011</div>
<div class="t" style="left:199px;top:211px;height:17px;line-height:17px;font-size:10.4px;font-weight:normal;color:#000;margin-top:1px">Fecha de Inicio</div>
<div style="left:308px;top:210px;width:91px;height:19px;background:#fff;border:1px solid #646464;box-sizing:border-box"></div>
<div class="t" style="left:312px;top:211px;height:17px;line-height:17px;font-size:10.8px;font-weight:normal;color:#000;">30/06/2017</div>
<div style="left:376px;top:212px;width:20px;height:15px;background:linear-gradient(to right,#c4c4c4,#dcdcdc 30%,#dcdcdc 70%,#c4c4c4);border:1px solid #b8b8b8;box-sizing:border-box"></div>
<svg style="position:absolute;left:381px;top:213px;" width="12" height="12" viewBox="0 0 12 12"><rect x="0" y="0" width="11" height="11.5" fill="#fff"/><rect x="0" y="0" width="10.5" height="1.6" fill="#000"/><path d="M10.5 1V11.5" stroke="#0010a0" stroke-width="1.1"/><path d="M0.5 11H10.5" stroke="#0010a0" stroke-width="1" stroke-dasharray="1.5,1"/><path d="M1.6 4.2L3.4 2.8V10M1.8 10.2H4.6" fill="none" stroke="#000" stroke-width="1.3"/><path d="M9 3.2H6.3V6.1H7.6Q9.2 6.1 9.2 8.1Q9.2 10.1 7.5 10.1H5.8" fill="none" stroke="#000" stroke-width="1.3"/></svg>
<div class="t" style="left:714px;top:211px;height:17px;line-height:17px;font-size:10.4px;font-weight:normal;color:#000;margin-top:1px">Fecha de Finalización</div>
<div style="left:822px;top:210px;width:91px;height:19px;background:#fff;border:1px solid #646464;box-sizing:border-box"></div>
<div class="t" style="left:832px;top:211px;height:17px;line-height:17px;font-size:10.8px;font-weight:normal;color:#000;">/&nbsp; /</div>
<div style="left:890px;top:212px;width:20px;height:15px;background:linear-gradient(to right,#c4c4c4,#dcdcdc 30%,#dcdcdc 70%,#c4c4c4);border:1px solid #b8b8b8;box-sizing:border-box"></div>
<svg style="position:absolute;left:895px;top:213px;" width="12" height="12" viewBox="0 0 12 12"><rect x="0" y="0" width="11" height="11.5" fill="#fff"/><rect x="0" y="0" width="10.5" height="1.6" fill="#000"/><path d="M10.5 1V11.5" stroke="#0010a0" stroke-width="1.1"/><path d="M0.5 11H10.5" stroke="#0010a0" stroke-width="1" stroke-dasharray="1.5,1"/><path d="M1.6 4.2L3.4 2.8V10M1.8 10.2H4.6" fill="none" stroke="#000" stroke-width="1.3"/><path d="M9 3.2H6.3V6.1H7.6Q9.2 6.1 9.2 8.1Q9.2 10.1 7.5 10.1H5.8" fill="none" stroke="#000" stroke-width="1.3"/></svg>
<div class="t" style="left:199px;top:232px;height:17px;line-height:17px;font-size:10.4px;font-weight:normal;color:#000;margin-top:1px">Descripción del Viaje</div>
<div style="left:308px;top:232px;width:573px;height:19px;background:#fff;border:1px solid #646464;box-sizing:border-box"></div>
<div class="t" style="left:310px;top:232px;height:18px;line-height:18px;font-size:10.8px;font-weight:normal;color:#000;">Fire can be our friend; whether it's toasting marshmallows or raining down on Ch</div>
<div style="left:890px;top:231px;width:24px;height:21px;border:1px solid #c8c8c8;border-radius:4px;box-sizing:border-box;background:linear-gradient(#fafafa,#f0f0f0 50%,#dedede)"></div>
<svg style="position:absolute;left:894px;top:234px;" width="15" height="15" viewBox="0 0 15 15"><defs><linearGradient id="eg2" x1="0" y1="0" x2="1" y2="1"><stop offset="0" stop-color="#e4f2ff"/><stop offset="1" stop-color="#98c8f4"/></linearGradient></defs><rect x="0.5" y="0.5" width="14" height="14" rx="1.2" fill="url(#eg2)" stroke="#3a5a80"/><path d="M4.5 10.5L12.8 2.2" stroke="#1e4a8a" stroke-width="3.2" stroke-linecap="round"/><path d="M4.5 10.5L12.8 2.2" stroke="#4aa8f0" stroke-width="1.6" stroke-linecap="round"/><path d="M2.5 12.5L3.2 9.2L5.8 11.8Z" fill="#f0b818" stroke="#c08a10" stroke-width="0.6"/><path d="M3 12.6H12.5" stroke="#40506a" stroke-width="0.8"/></svg>
<div style="left:193px;top:259px;width:725px;height:1px;background:#8e8e8e"></div>
<div style="left:193px;top:260px;width:725px;height:1px;background:#fff"></div>
<div style="left:193px;top:261px;width:725px;height:16px;background:linear-gradient(to right,#0a7bc3 0%,#1683c7 22%,#3f94cc 45%,#6aa6d1 68%,#86add4 85%,#98b4d8 100%)"></div>
<div class="t" style="left:205px;top:261px;height:16px;line-height:16px;font-size:11.7px;font-weight:bold;color:#fff;">Detalle de Tramos</div>
<div style="left:195px;top:281px;width:1px;height:17px;background:#a0a0a0"></div>
<div style="left:196px;top:281px;width:1px;height:17px;background:#fff"></div>
<div style="left:202px;top:278px;width:110px;height:21px;border:1px solid #a8a8a8;border-radius:3px;box-sizing:border-box;background:linear-gradient(#f6f6f6 0%,#ececec 45%,#d2d2d2 50%,#e2e2e2 100%)"></div>
<svg style="position:absolute;left:207px;top:281px;" width="20" height="16" viewBox="0 0 20 16"><path d="M2 8L7 14L18 2" fill="none" stroke="#b4b4b4" stroke-width="2.2"/></svg>
<div class="t" style="left:229px;top:279px;height:19px;line-height:19px;font-size:11px;font-weight:normal;color:#8c8c8c;text-shadow:0 1px 0 rgba(255,255,255,0.6)">Finalizar Tramo</div>
<div style="left:313px;top:278px;width:122px;height:21px;border:1px solid #c8c8c8;border-radius:3px;box-sizing:border-box;background:linear-gradient(#fcfcfc,#f2f2f2 50%,#e4e4e4)"></div>
<svg style="position:absolute;left:318px;top:280px;" width="16" height="16" viewBox="0 0 16 16"><defs><linearGradient id="gg" x1="0" y1="0" x2="1" y2="1"><stop offset="0" stop-color="#0e7a30"/><stop offset="0.45" stop-color="#5cb848"/><stop offset="0.6" stop-color="#2e9a3a"/><stop offset="1" stop-color="#0a6a28"/></linearGradient></defs><rect x="0" y="0" width="16" height="16" fill="url(#gg)"/><path d="M8 1.5V14.5" stroke="#e8f8e8" stroke-width="0.8"/><path d="M10 4.5Q8 3.5 6.5 4.8Q5.5 6.5 8 7.8Q10.5 9 9.5 10.8Q8 12.3 6 11.2" fill="none" stroke="#f0fff0" stroke-width="1.1"/></svg>
<div class="t" style="left:337px;top:279px;height:19px;line-height:19px;font-size:11.2px;font-weight:normal;color:#000;">Gastos y Anticipos</div>
<div style="left:436px;top:278px;width:122px;height:21px;border:1px solid #c8c8c8;border-radius:3px;box-sizing:border-box;background:linear-gradient(#fcfcfc,#f2f2f2 50%,#e4e4e4)"></div>
<svg style="position:absolute;left:450px;top:280px;" width="16" height="16" viewBox="0 0 16 16"><path d="M0.5 0.5H8L13.5 5.5V15.5H0.5Z" fill="#eef2fa" stroke="#55658c"/><path d="M2.5 6.5H9M2.5 9.5H9M2.5 12H9" stroke="#c8cce8" stroke-width="1.5"/><path d="M6 6.5H10V4L15.5 8.5L10 13V10.5H6Z" fill="#50d040" stroke="#28a028" stroke-width="0.6"/></svg>
<div class="t" style="left:467px;top:279px;height:19px;line-height:19px;font-size:11.5px;font-weight:normal;color:#000;">Combustible</div>
<svg style="position:absolute;left:546px;top:287px;" width="7" height="4" viewBox="0 0 7 4"><path d="M0 0H7L3.5 4Z" fill="#222"/></svg>
<div style="left:193px;top:302px;width:699px;height:75px;background:#a0a0a4"></div>
<div style="left:193px;top:302px;width:666px;height:17px;background:#808080"></div>
<div class="t" style="left:194px;top:302.5px;height:17px;line-height:17px;font-size:10.5px;font-weight:normal;color:#fff;">Tramo</div>
<div class="t" style="left:229px;top:302.5px;height:17px;line-height:17px;font-size:10.5px;font-weight:normal;color:#fff;">Estado</div>
<div class="t" style="left:324px;top:302.5px;height:17px;line-height:17px;font-size:10.5px;font-weight:normal;color:#fff;">Origen</div>
<div class="t" style="left:479px;top:302.5px;height:17px;line-height:17px;font-size:10.5px;font-weight:normal;color:#fff;">Destino</div>
<div class="t" style="left:634px;top:302.5px;height:17px;line-height:17px;font-size:10.5px;font-weight:normal;color:#fff;">Inicio</div>
<div class="t" style="left:747px;top:302.5px;height:17px;line-height:17px;font-size:10.5px;font-weight:normal;color:#fff;">Final</div>
<div style="left:193px;top:319px;width:665px;height:16px;background:#0a7dc4"></div>
<div style="left:227px;top:319px;width:1px;height:16px;background:#9cc4e0"></div>
<div style="left:322px;top:319px;width:1px;height:16px;background:#9cc4e0"></div>
<div style="left:477px;top:319px;width:1px;height:16px;background:#9cc4e0"></div>
<div style="left:632px;top:319px;width:1px;height:16px;background:#9cc4e0"></div>
<div style="left:745px;top:319px;width:1px;height:16px;background:#9cc4e0"></div>
<div class="t" style="left:193px;top:320px;height:16px;line-height:16px;font-size:10.8px;font-weight:bold;color:#fff;width:34px;text-align:center">1</div>
<div class="t" style="left:230px;top:320px;height:16px;line-height:16px;font-size:10.8px;font-weight:bold;color:#fff;">Abierto</div>
<div class="t" style="left:325px;top:320px;height:16px;line-height:16px;font-size:10.8px;font-weight:bold;color:#fff;">C.A.B.A</div>
<div class="t" style="left:480px;top:320px;height:16px;line-height:16px;font-size:10.8px;font-weight:bold;color:#fff;">C.A.B.A</div>
<div class="t" style="left:640px;top:320px;height:16px;line-height:16px;font-size:10.8px;font-weight:bold;color:#fff;letter-spacing:1.05px">08/11/2017 09:45</div>
<div style="left:892px;top:302px;width:26px;height:75px;background:#f0f0f0;border-left:1px solid #fff;border-bottom:1px solid #fff;box-sizing:border-box"></div>
<div style="left:893px;top:304px;width:23px;height:23px;border:1px solid #c8c8c8;border-radius:3px;box-sizing:border-box;background:linear-gradient(#fcfcfc,#f2f2f2 50%,#e4e4e4)"></div>
<svg style="position:absolute;left:896px;top:307px;" width="16" height="16" viewBox="0 0 16 16"><path d="M4.5 2.5H11.5L14.5 5.5V15.5H4.5Z" fill="#fff" stroke="#8a7fc0"/><path d="M11.5 2.5V5.5H14.5" fill="#ddd" stroke="#8a7fc0"/><path d="M2 4H8M5 1V7" stroke="#f08020" stroke-width="2.2"/></svg>
<div style="left:893px;top:328px;width:23px;height:22px;border:1px solid #c8c8c8;border-radius:3px;box-sizing:border-box;background:linear-gradient(#fcfcfc,#f2f2f2 50%,#e4e4e4)"></div>
<svg style="position:absolute;left:897px;top:332px;" width="15" height="15" viewBox="0 0 15 15"><defs><linearGradient id="eg3" x1="0" y1="0" x2="1" y2="1"><stop offset="0" stop-color="#e4f2ff"/><stop offset="1" stop-color="#98c8f4"/></linearGradient></defs><rect x="0.5" y="0.5" width="14" height="14" rx="1.2" fill="url(#eg3)" stroke="#3a5a80"/><path d="M4.5 10.5L12.8 2.2" stroke="#1e4a8a" stroke-width="3.2" stroke-linecap="round"/><path d="M4.5 10.5L12.8 2.2" stroke="#4aa8f0" stroke-width="1.6" stroke-linecap="round"/><path d="M2.5 12.5L3.2 9.2L5.8 11.8Z" fill="#f0b818" stroke="#c08a10" stroke-width="0.6"/><path d="M3 12.6H12.5" stroke="#40506a" stroke-width="0.8"/></svg>
<div style="left:193px;top:377px;width:725px;height:1px;background:#8e8e8e"></div>
<div style="left:193px;top:378px;width:725px;height:1px;background:#fff"></div>
<div style="left:193px;top:379px;width:725px;height:16px;background:linear-gradient(to right,#0a7bc3 0%,#1683c7 22%,#3f94cc 45%,#6aa6d1 68%,#86add4 85%,#98b4d8 100%)"></div>
<div class="t" style="left:205px;top:379px;height:16px;line-height:16px;font-size:11.7px;font-weight:bold;color:#fff;">Datos Básicos del Tramo</div>
<div class="t" style="left:199px;top:399px;height:17px;line-height:17px;font-size:10.4px;font-weight:normal;color:#000;margin-top:1px">Tipo de Servicio</div>
<div style="left:308px;top:398px;width:173px;height:19px;background:#fff;border:1px solid #646464;box-sizing:border-box"></div>
<div class="t" style="left:310px;top:399px;height:17px;line-height:17px;font-size:10.8px;font-weight:normal;color:#000;">Consolidado con Carga</div>
<div class="t" style="left:199px;top:420px;height:17px;line-height:17px;font-size:10.4px;font-weight:normal;color:#000;margin-top:1px">Código Chofer</div>
<div style="left:308px;top:419px;width:47px;height:19px;background:#fff;border:1px solid #646464;box-sizing:border-box"></div>
<div class="t" style="right:885px;top:420px;height:17px;line-height:17px;font-size:10.8px;font-weight:normal;color:#000;text-align:right;">0003</div>
<div class="t" style="left:360px;top:422px;height:17px;line-height:17px;font-size:10.8px;font-weight:bold;color:#161688;">JUAREZ BARCO</div>
<div class="t" style="left:199px;top:441px;height:17px;line-height:17px;font-size:10.4px;font-weight:normal;color:#000;margin-top:1px">Unidad Tractora</div>
<div style="left:308px;top:440px;width:47px;height:19px;background:#fff;border:1px solid #646464;box-sizing:border-box"></div>
<div class="t" style="left:310px;top:441px;height:17px;line-height:17px;font-size:10.8px;font-weight:normal;color:#000;">JJD 949</div>
<div class="t" style="left:199px;top:462px;height:17px;line-height:17px;font-size:10.4px;font-weight:normal;color:#000;margin-top:1px">Unidad Remolcada</div>
<div style="left:308px;top:461px;width:47px;height:19px;background:#fff;border:1px solid #646464;box-sizing:border-box"></div>
<div class="t" style="left:310px;top:462px;height:17px;line-height:17px;font-size:10.8px;font-weight:normal;color:#000;">FCQ 743</div>
<div class="t" style="left:199px;top:483px;height:17px;line-height:17px;font-size:10.4px;font-weight:normal;color:#000;margin-top:1px">Tipo Unidad</div>
<div style="left:308px;top:482px;width:46px;height:19px;background:#fff;border:1px solid #646464;box-sizing:border-box"></div>
<div class="t" style="right:886px;top:483px;height:17px;line-height:17px;font-size:10.8px;font-weight:normal;color:#000;text-align:right;">1</div>
<div class="t" style="left:358px;top:484px;height:17px;line-height:17px;font-size:10.8px;font-weight:bold;color:#161688;">FURGON CHICO/MEDIANO</div>
<div class="t" style="left:594px;top:398px;height:17px;line-height:17px;font-size:10.4px;font-weight:normal;color:#000;margin-top:1px">Estado Liquidación</div>
<div class="t" style="left:693px;top:399px;height:17px;line-height:17px;font-size:10.8px;font-weight:bold;color:#161688;">Sin Liquidar</div>
<div class="t" style="left:594px;top:421px;height:17px;line-height:17px;font-size:10.4px;font-weight:normal;color:#000;margin-top:1px">Empresa</div>
<div class="t" style="left:693px;top:420px;height:17px;line-height:17px;font-size:10.8px;font-weight:bold;color:#161688;">8019 - LEGUIZAMON NICOLAS ALBERT</div>
<div class="t" style="left:594px;top:483px;height:17px;line-height:17px;font-size:10.4px;font-weight:normal;color:#000;margin-top:1px">Pedido</div>
<div style="left:693px;top:482px;width:97px;height:19px;background:#fff;border:1px solid #646464;box-sizing:border-box"></div>
<div class="t" style="left:693px;top:483px;height:17px;line-height:17px;font-size:10.8px;font-weight:normal;color:#000;width:97px;text-align:center">0000-00000000</div>
<div style="left:192px;top:505px;width:726px;height:1px;background:#8e8e8e"></div>
<div style="left:192px;top:506px;width:726px;height:1px;background:#fff"></div>
<div style="left:193px;top:507px;width:725px;height:20px;background:#e6e6e6"></div>
<div style="left:194px;top:508px;width:102px;height:20px;border-right:1px solid #909090;border-left:1px solid #a0a0a0;box-sizing:border-box;background:linear-gradient(#f8f8f8,#d4dde8)"></div>
<div class="t" style="left:199px;top:509px;height:17px;line-height:17px;font-size:10.8px;font-weight:normal;color:#000;">Gastos y Anticipos</div>
<div style="left:296px;top:508px;width:76px;height:20px;border-right:1px solid #909090;box-sizing:border-box;background:linear-gradient(#f8f8f8,#d4dde8)"></div>
<div class="t" style="left:301px;top:509px;height:17px;line-height:17px;font-size:10.8px;font-weight:normal;color:#000;">Fojas y PDI ´s</div>
<div style="left:441px;top:508px;width:68px;height:20px;border-right:1px solid #909090;box-sizing:border-box;background:linear-gradient(#f8f8f8,#d4dde8)"></div>
<div class="t" style="left:446px;top:509px;height:17px;line-height:17px;font-size:10.8px;font-weight:normal;color:#000;">Valorización</div>
<div style="left:509px;top:508px;width:70px;height:20px;border-right:1px solid #909090;box-sizing:border-box;background:linear-gradient(#f8f8f8,#d4dde8)"></div>
<div class="t" style="left:514px;top:509px;height:17px;line-height:17px;font-size:10.8px;font-weight:normal;color:#000;">Facturación</div>
<div style="left:579px;top:508px;width:58px;height:20px;border-right:1px solid #909090;box-sizing:border-box;background:linear-gradient(#f8f8f8,#d4dde8)"></div>
<div class="t" style="left:584px;top:509px;height:17px;line-height:17px;font-size:10.8px;font-weight:normal;color:#000;">Kilómetros</div>
<div style="left:637px;top:508px;width:115px;height:20px;border-right:1px solid #909090;box-sizing:border-box;background:linear-gradient(#f8f8f8,#d4dde8)"></div>
<div class="t" style="left:642px;top:509px;height:17px;line-height:17px;font-size:10.8px;font-weight:normal;color:#000;">Cruces de Facturación</div>
<div style="left:752px;top:508px;width:116px;height:20px;border-right:1px solid #909090;box-sizing:border-box;background:linear-gradient(#f8f8f8,#d4dde8)"></div>
<div class="t" style="left:757px;top:509px;height:17px;line-height:17px;font-size:10.8px;font-weight:normal;color:#000;">Vales de Combustibles</div>
<div style="left:193px;top:527px;width:725px;height:116px;border:1px solid #8c8c8c;border-bottom:2px solid #8c8c8c;box-sizing:border-box;background:#f0f0f0"></div>
<div style="left:194px;top:528px;width:723px;height:1px;background:#fff"></div>
<div style="left:194px;top:528px;width:1px;height:113px;background:#fff"></div>
<div style="left:197px;top:613px;width:718px;height:25px;border-right:1px solid #a0a0a0;border-bottom:1px solid #a0a0a0;border-top:1px solid #fff;box-sizing:border-box"></div>
<div style="left:371px;top:507px;width:71px;height:21px;border-left:3px double #909090;border-right:1px solid #909090;box-sizing:border-box;background:linear-gradient(#fafafa,#d6dee8)"></div>
<div class="t" style="left:376px;top:509px;height:19px;line-height:19px;font-size:11.8px;font-weight:bold;color:#000;">Personal</div>
<div style="left:197px;top:531px;width:700px;height:82px;background:#a0a0a4"></div>
<div style="left:197px;top:531px;width:624px;height:17px;background:#808080"></div>
<div class="t" style="left:199px;top:531.5px;height:17px;line-height:17px;font-size:10.5px;font-weight:normal;color:#fff;">Personal</div>
<div class="t" style="left:354px;top:531.5px;height:17px;line-height:17px;font-size:10.5px;font-weight:normal;color:#fff;">Función</div>
<div class="t" style="left:455px;top:531.5px;height:17px;line-height:17px;font-size:10.5px;font-weight:normal;color:#fff;">Empresa</div>
<div class="t" style="left:640px;top:531.5px;height:17px;line-height:17px;font-size:10.5px;font-weight:normal;color:#fff;">A Liquidar</div>
<div class="t" style="left:729px;top:531.5px;height:17px;line-height:17px;font-size:10.5px;font-weight:normal;color:#fff;">Nro Liquidación</div>
<div style="left:197px;top:548px;width:624px;height:16px;background:#0a7dc4;outline:1px dotted #a00040;outline-offset:-1px"></div>
<div style="left:197px;top:564px;width:624px;height:16px;background:#fff"></div>
<div style="left:351px;top:548px;width:1px;height:32px;background:#b8b8b8"></div>
<div style="left:452px;top:548px;width:1px;height:32px;background:#b8b8b8"></div>
<div style="left:638px;top:548px;width:1px;height:32px;background:#b8b8b8"></div>
<div style="left:727px;top:548px;width:1px;height:32px;background:#b8b8b8"></div>
<div class="t" style="left:199px;top:549px;height:16px;line-height:16px;font-size:10.8px;font-weight:bold;color:#fff;">3 - JUAREZ BARCO</div>
<div class="t" style="left:354px;top:549px;height:16px;line-height:16px;font-size:10.8px;font-weight:bold;color:#fff;">Chofer</div>
<div class="t" style="left:455px;top:549px;height:16px;line-height:16px;font-size:10.8px;font-weight:bold;color:#fff;width:182px;overflow:hidden;white-space:nowrap">8019 - LEGUIZAMON NICOLAS ALI</div>
<div class="t" style="right:515px;top:549px;height:16px;line-height:16px;font-size:10.8px;font-weight:bold;color:#fff;text-align:right;">0,00</div>
<div class="t" style="left:729px;top:549px;height:16px;line-height:16px;font-size:10.8px;font-weight:bold;color:#fff;">Sin Liquidar</div>
<div class="t" style="left:199px;top:565px;height:16px;line-height:16px;font-size:10.8px;font-weight:normal;color:#000;letter-spacing:-0.5px;">4 - JOSE TECONTRATE</div>
<div class="t" style="left:354px;top:565px;height:16px;line-height:16px;font-size:10.8px;font-weight:normal;color:#000;">Acompañante</div>
<div class="t" style="left:455px;top:565px;height:16px;line-height:16px;font-size:10.8px;font-weight:normal;color:#000;letter-spacing:-0.5px;width:182px;overflow:hidden;white-space:nowrap">8019 - LEGUIZAMON NICOLAS ALBERT</div>
<div class="t" style="right:515px;top:565px;height:16px;line-height:16px;font-size:10.8px;font-weight:normal;color:#000;text-align:right;">0,00</div>
<div class="t" style="left:729px;top:565px;height:16px;line-height:16px;font-size:10.8px;font-weight:normal;color:#000;">Sin Liquidar</div>
<div style="left:897px;top:531px;width:17px;height:82px;background:#f0f0f0"></div>
<div style="left:898px;top:548px;width:15px;height:32px;background:#cdcdcd"></div>
<svg style="position:absolute;left:901px;top:537px;" width="9" height="6" viewBox="0 0 9 6"><path d="M1 5L4.5 1.5L8 5" fill="none" stroke="#505050" stroke-width="1.8"/></svg>
<svg style="position:absolute;left:901px;top:602px;" width="9" height="6" viewBox="0 0 9 6"><path d="M1 1L4.5 4.5L8 1" fill="none" stroke="#505050" stroke-width="1.8"/></svg>
<div style="left:199px;top:615px;width:166px;height:21px;border:1px solid #c8c8c8;border-radius:3px;box-sizing:border-box;background:linear-gradient(#fcfcfc,#f2f2f2 50%,#e4e4e4)"></div>
<svg style="position:absolute;left:212px;top:618px;" width="12" height="15" viewBox="0 0 12 15"><rect x="1" y="0.5" width="10" height="13.5" fill="#eef4fb"/><path d="M0.5 0V14.5" stroke="#a8c0e0"/><path d="M0 14.5H11" stroke="#7090c0"/><path d="M2 3H6.5M2 7H6.5M2 11H6.5" stroke="#90b0d8" stroke-width="1.2"/><path d="M7.3 3.2L8.4 4.1L10.4 1.6M7.3 7.2L8.4 8.1L10.4 5.6M7.3 11.2L8.4 12.1L10.4 9.6" fill="none" stroke="#1a3a8a" stroke-width="1.3"/></svg>
<div class="t" style="left:228px;top:617px;height:17px;line-height:17px;font-size:11.2px;font-weight:normal;color:#000;">Detalle de la Valorización</div>
<div style="left:366px;top:616px;width:1px;height:20px;background:#a0a0a0"></div>
<div style="left:191px;top:643px;width:728px;height:20px;background:#f0f0f0"></div>
<div class="t" style="left:206px;top:646px;height:17px;line-height:17px;font-size:11.1px;font-weight:normal;color:#000;">Ult. Mod.: 2017-06-30 16:26</div>
<div style="left:360px;top:646px;width:1px;height:16px;background:#d0d0d0"></div>
<div class="t" style="left:400px;top:646px;height:17px;line-height:17px;font-size:11.1px;font-weight:normal;color:#000;">Usuario: @@@</div>
<div style="left:510px;top:646px;width:1px;height:16px;background:#d0d0d0"></div>
<div class="t" style="left:514px;top:646px;height:17px;line-height:17px;font-size:11.1px;font-weight:normal;color:#000;">ST386General</div>
<div style="left:609px;top:646px;width:1px;height:16px;background:#d0d0d0"></div>
<div style="left:915px;top:654px;width:2px;height:2px;background:#b0b0b0"></div>
<div style="left:912px;top:657px;width:2px;height:2px;background:#b0b0b0"></div>
<div style="left:915px;top:657px;width:2px;height:2px;background:#b0b0b0"></div>
<div style="left:909px;top:660px;width:2px;height:2px;background:#b0b0b0"></div>
<div style="left:912px;top:660px;width:2px;height:2px;background:#b0b0b0"></div>
<div style="left:915px;top:660px;width:2px;height:2px;background:#b0b0b0"></div>
<div style="left:919px;top:138px;width:1px;height:504px;background:#a0a0a0"></div>
</body></html>
